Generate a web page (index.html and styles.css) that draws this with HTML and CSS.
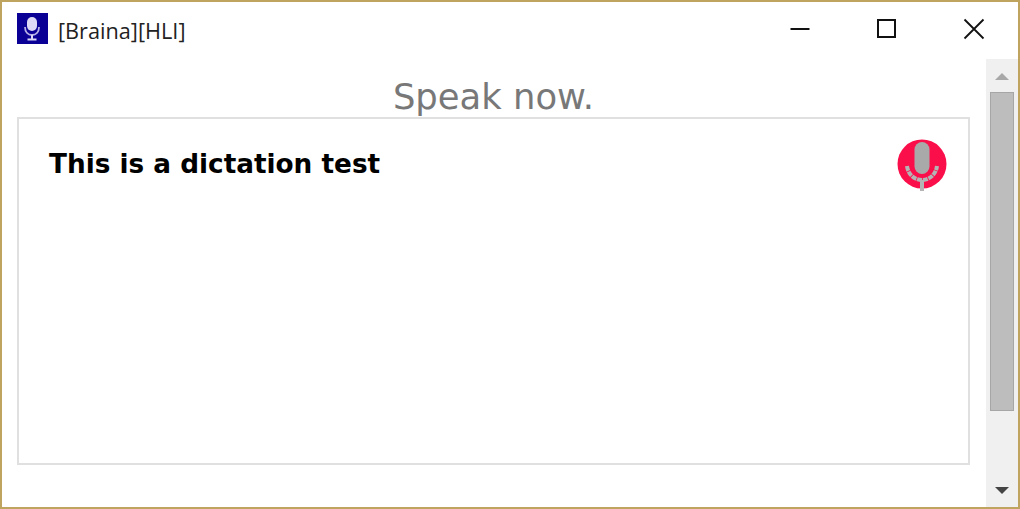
FILE: index.html
```html
<!DOCTYPE html>
<html lang="en">
  <head>
    <meta charset="UTF-8" />
    <title>[Braina][HLI]</title>
    <link rel="stylesheet" href="styles.css">
  </head>
  <body>
    <div class="window">
      <div class="titlebar">
        <div class="app-icon">
          <svg width="31" height="31" viewBox="0 0 31 31">
            <rect x="10" y="4" width="10" height="14" rx="5" fill="#dcd8f6" />
            <path d="M8 14c0 5 3 8 7 8s7-3 7-8" fill="none" stroke="#b9b2e8" stroke-width="1.800" />
            <path d="M15 22v4M10.500 26.500h9" fill="none" stroke="#dcd8f6" stroke-width="2" />
          </svg>
        </div>
        <div class="app-title">[Braina][HLI]</div>
        <div class="controls">
          <svg class="ctl ctl-min" width="20" height="20" viewBox="0 0 20 20">
            <path d="M0.500 10h19" stroke="#111" stroke-width="2" />
          </svg>
          <svg class="ctl ctl-max" width="19" height="19" viewBox="0 0 19 19">
            <rect x="1" y="1" width="17" height="17" fill="none" stroke="#111" stroke-width="2" />
          </svg>
          <svg class="ctl ctl-close" width="22" height="22" viewBox="0 0 22 22">
            <path d="M1.500 1.500l19 19M20.500 1.500l-19 19" stroke="#111" stroke-width="1.800" />
          </svg>
        </div>
      </div>

      <div class="main">
        <div class="content">
          <h2 class="prompt">Speak now.</h2>
          <div class="dictation">
            <p class="dictation-text">This is a dictation test</p>
            <svg class="mic-badge" width="50" height="52" viewBox="0 0 50 52">
              <circle cx="25" cy="25" r="24.500" fill="#fb0f4b" />
              <rect x="17.500" y="3" width="15" height="32" rx="7.500" fill="#a9a9a9" />
              <path d="M10 27c1 8 7 14 15 14s14-6 15-14" fill="none" stroke="#b4b4b4" stroke-width="4" stroke-dasharray="5 0.800" />
              <path d="M25 41v11" stroke="#b4b4b4" stroke-width="4" />
            </svg>
          </div>
        </div>
        <div class="scrollbar">
          <div class="arrow-up"></div>
          <div class="thumb"></div>
          <div class="arrow-down"></div>
        </div>
      </div>
    </div>
  </body>
</html>
```

FILE: styles.css
```css
html,
body {
  margin: 0;
  padding: 0;
}

body {
  width: 1020px;
  height: 509px;
  overflow: hidden;
  background-color: #ffffff;
}

.window {
  box-sizing: border-box;
  width: 1020px;
  height: 509px;
  border: 2px solid #bfa45f;
  display: flex;
  flex-direction: column;
}

.titlebar {
  box-sizing: border-box;
  height: 57px;
  display: flex;
  align-items: center;
  padding: 0 0 4px 15px;
  flex-shrink: 0;
}

.app-icon {
  width: 31px;
  height: 31px;
  background-color: #0b0096;
  margin-top: -1px;
}

.app-icon svg {
  display: block;
}

.app-title {
  margin: 4px 0 0 10px;
  font-family: "Open Sans", sans-serif;
  font-size: 21.7px;
  color: #222222;
}

.controls {
  margin-left: auto;
  display: flex;
  align-items: center;
  padding-right: 33px;
}

.ctl {
  display: block;
}

.ctl-max {
  margin-left: 67px;
}

.ctl-close {
  margin-left: 67px;
}

.main {
  flex: 1;
  display: flex;
  min-height: 0;
}

.content {
  flex: 1;
  padding: 0 16px 0 15px;
}

.prompt {
  margin: 0;
  height: 58px;
  line-height: 76px;
  text-align: center;
  font-family: "DejaVu Sans", sans-serif;
  font-size: 35.4px;
  font-weight: normal;
  color: #787878;
}

.dictation {
  position: relative;
  box-sizing: border-box;
  height: 348px;
  border: 2px solid #e0e0e0;
}

.dictation-text {
  margin: 0;
  padding: 27px 0 0 30px;
  font-family: "DejaVu Sans", sans-serif;
  font-size: 26.3px;
  font-weight: bold;
  line-height: 36px;
  color: #000000;
}

.mic-badge {
  position: absolute;
  top: 20px;
  right: 21px;
}

.scrollbar {
  width: 32px;
  background-color: #f0f0f0;
  display: flex;
  flex-direction: column;
  align-items: center;
}

.arrow-up {
  width: 0;
  height: 0;
  margin-top: 14px;
  border-left: 7px solid transparent;
  border-right: 7px solid transparent;
  border-bottom: 7px solid #a8a8a8;
}

.thumb {
  box-sizing: border-box;
  width: 24px;
  height: 319px;
  margin-top: 12px;
  background-color: #bdbdbd;
  border: 1px solid #a6a6a6;
}

.arrow-down {
  width: 0;
  height: 0;
  margin-top: 76px;
  border-left: 7px solid transparent;
  border-right: 7px solid transparent;
  border-top: 7px solid #444444;
}
```
